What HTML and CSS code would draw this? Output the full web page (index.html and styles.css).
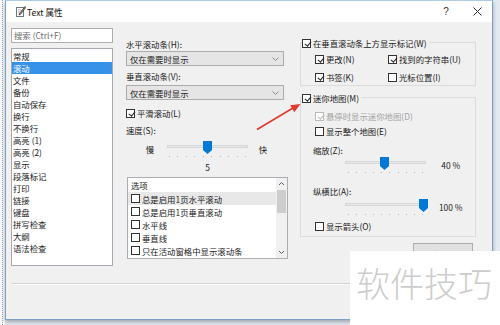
FILE: index.html
```html
<!DOCTYPE html>
<html lang="zh-CN">
<head>
  <meta charset="UTF-8">
  <title>Text 属性</title>
  <link rel="stylesheet" href="styles.css">
</head>
<body>
<div class="desk">
  <div class="window">
    <div class="titlebar">
      <svg class="app-icon" width="10" height="11" viewBox="0 0 10 11">
        <rect x="0.5" y="1.5" width="7" height="9" fill="#fff" stroke="#6b7b8c"/>
        <line x1="2" y1="4" x2="5" y2="4" stroke="#b0b8c0"/>
        <line x1="2" y1="6" x2="4" y2="6" stroke="#b0b8c0"/>
        <path d="M9 0.5 L3.5 7.5 L3 9 L4.5 8.3 L9.8 1.5 Z" fill="#c8a060" stroke="#333" stroke-width="0.8"/>
      </svg>
      <span class="title">Text 属性</span>
      <span class="help">?</span>
      <span class="close">
        <svg width="9" height="9" viewBox="0 0 9 9"><path d="M0.5 0.5 L8.5 8.5 M8.5 0.5 L0.5 8.5" stroke="#333" stroke-width="1"/></svg>
      </span>
    </div>

    <div class="dialog">
      <div class="panes">
        <!-- page list -->
        <div class="nav">
          <div class="search">搜索 (Ctrl+F)</div>
          <ul class="nav-list">
            <li>常规</li>
            <li class="selected">滚动</li>
            <li>文件</li>
            <li>备份</li>
            <li>自动保存</li>
            <li>换行</li>
            <li>不换行</li>
            <li>高亮 (1)</li>
            <li>高亮 (2)</li>
            <li>显示</li>
            <li>段落标记</li>
            <li>打印</li>
            <li>链接</li>
            <li>键盘</li>
            <li>拼写检查</li>
            <li>大纲</li>
            <li>语法检查</li>
          </ul>
        </div>

        <!-- scrollbars column -->
        <div class="middle">
          <div class="label first">水平滚动条(H):</div>
          <div class="combo"><span>仅在需要时显示</span><svg width="7" height="4" viewBox="0 0 7 4"><path d="M0.5 0.5 L3.5 3.5 L6.5 0.5" fill="none" stroke="#888"/></svg></div>
          <div class="label second">垂直滚动条(V):</div>
          <div class="combo combo-2"><span>仅在需要时显示</span><svg width="7" height="4" viewBox="0 0 7 4"><path d="M0.5 0.5 L3.5 3.5 L6.5 0.5" fill="none" stroke="#888"/></svg></div>
          <div class="check-row smooth"><span class="box checked"></span>平滑滚动(L)</div>
          <div class="label speed">速度(S):</div>
          <div class="slider-row mid">
            <span class="end slow">慢</span>
            <div class="slider">
              <div class="track"></div>
              <svg class="thumb" style="left: 36px" width="9" height="13" viewBox="0 0 9 13"><path d="M0 0 H9 V9 L4.5 13 L0 9 Z" fill="#0078d7"/></svg>
              <div class="ticks"><i></i><i></i><i></i><i></i><i></i><i></i><i></i><i></i><i></i><i></i></div>
            </div>
            <span class="end fast">快</span>
          </div>
          <div class="speed-value">5</div>

          <div class="options">
            <div class="opt-body">
              <div class="opt-head">选项</div>
              <div class="opt-row hover"><span class="box"></span>总是启用1页水平滚动</div>
              <div class="opt-row"><span class="box"></span>总是启用1页垂直滚动</div>
              <div class="opt-row"><span class="box"></span>水平线</div>
              <div class="opt-row"><span class="box"></span>垂直线</div>
              <div class="opt-row"><span class="box"></span>只在活动窗格中显示滚动条</div>
            </div>
            <div class="scrollbar">
              <div class="sb-btn"><svg width="5" height="3" viewBox="0 0 5 3"><path d="M0 3 L2.5 0.5 L5 3" fill="none" stroke="#606060"/></svg></div>
              <div class="sb-thumb"></div>
              <div class="sb-btn down"><svg width="5" height="3" viewBox="0 0 5 3"><path d="M0 0 L2.5 2.5 L5 0" fill="none" stroke="#606060"/></svg></div>
            </div>
          </div>
        </div>

        <!-- markers and minimap column -->
        <div class="right">
          <div class="group markers">
            <div class="group-head"><span class="box checked"></span>在垂直滚动条上方显示标记(W)</div>
            <div class="group-row r1">
              <div class="col1"><span class="box checked"></span>更改(N)</div>
              <div><span class="box checked"></span>找到的字符串(U)</div>
            </div>
            <div class="group-row r2">
              <div class="col1"><span class="box checked"></span>书签(K)</div>
              <div><span class="box"></span>光标位置(I)</div>
            </div>
          </div>

          <div class="group minimap">
            <div class="group-head"><span class="box checked"></span>迷你地图(M)</div>
            <div class="group-row hover-map disabled"><span class="box checked"></span>悬停时显示迷你地图(D)</div>
            <div class="group-row whole-map"><span class="box"></span>显示整个地图(E)</div>
            <div class="label zoom-label">缩放(Z):</div>
            <div class="slider-row side">
              <div class="slider">
                <div class="track"></div>
                <svg class="thumb" style="left: 34.5px" width="9" height="13" viewBox="0 0 9 13"><path d="M0 0 H9 V9 L4.5 13 L0 9 Z" fill="#0078d7"/></svg>
                <div class="ticks"><i></i><i></i><i></i><i></i><i></i><i></i><i></i><i></i><i></i><i></i></div>
              </div>
              <span class="value">40 %</span>
            </div>
            <div class="label ratio-label">纵横比(A):</div>
            <div class="slider-row side second">
              <div class="slider">
                <div class="track"></div>
                <svg class="thumb" style="left: 73.5px" width="9" height="13" viewBox="0 0 9 13"><path d="M0 0 H9 V9 L4.5 13 L0 9 Z" fill="#0078d7"/></svg>
                <div class="ticks"><i></i><i></i><i></i><i></i><i></i><i></i><i></i><i></i><i></i><i></i></div>
              </div>
              <span class="value">100 %</span>
            </div>
            <div class="group-row arrows"><span class="box"></span>显示箭头(O)</div>
          </div>

          <button class="reset">默认(D)</button>
        </div>
      </div>
      <div class="separator"></div>
    </div>
  </div>

  <svg class="pointer" width="500" height="325" viewBox="0 0 500 325">
    <line x1="257" y1="129.5" x2="293" y2="108" stroke="#e2392f" stroke-width="1.6"/>
    <polygon points="300.5,104 294.3,112.2 290.2,105.3" fill="#e2392f"/>
  </svg>
  <div class="watermark">软件技巧</div>
</div>
</body>
</html>
```

FILE: styles.css
```css
* {
  box-sizing: border-box;
}

body {
  margin: 0;
  width: 500px;
  height: 325px;
  overflow: hidden;
  font-family: "Noto Sans CJK SC", "Noto Sans", sans-serif;
  font-size: 8.4px;
  color: #1a1a1a;
}

.desk {
  position: relative;
  width: 500px;
  height: 325px;
  background: linear-gradient(to right, #f7f8f9 0 5px, #e3eaf2 5px);
}

.desk::before {
  content: "";
  position: absolute;
  left: 2px;
  top: 0;
  height: 325px;
  border-left: 1px dotted #9aa3ad;
}

.window {
  margin-left: 5px;
  width: 488px;
  height: 320px;
  border: 1px solid #7d9fc6;
  border-top-color: #aecbea;
  background: #f0f0f0;
  box-shadow: 0 2px 4px rgba(0, 0, 0, 0.3);
  display: flex;
  flex-direction: column;
}

/* title bar */
.titlebar {
  height: 21px;
  background: #fff;
  display: flex;
  align-items: center;
  padding-left: 10px;
}

.app-icon {
  margin-top: -1px;
}

.title {
  margin-left: 1px;
  font-size: 8.6px;
  color: #111;
}

.help {
  margin-left: auto;
  width: 28px;
  text-align: center;
  font-family: "Liberation Sans", sans-serif;
  font-size: 10px;
  color: #333;
}

.close {
  width: 32px;
  height: 21px;
  display: flex;
  align-items: center;
  justify-content: center;
  padding-left: 3px;
}

/* dialog body */
.dialog {
  flex: 1;
  display: flex;
  flex-direction: column;
}

.panes {
  display: flex;
  height: 261px;
  padding: 6px 0 0 5px;
}

.separator {
  height: 2px;
  margin: 0 10px 0 5px;
  border-top: 1px solid #d3d3d3;
  border-bottom: 1px solid #fbfbfb;
}

/* page list */
.nav {
  width: 102px;
}

.search {
  height: 15px;
  border: 1px solid #abadb3;
  background: #fff;
  color: #6d6d6d;
  line-height: 13px;
  padding-left: 2px;
}

.nav-list {
  list-style: none;
  margin: 5px 0 0;
  padding: 1px 0 0;
  height: 218px;
  border: 1px solid #a5a9b0;
  background: #fff;
}

.nav-list li {
  height: 12px;
  line-height: 12px;
  padding-left: 1px;
}

.nav-list li.selected {
  background: #3592e8;
  color: #fff;
}

/* shared bits */
.label {
  height: 12px;
  line-height: 12px;
}

.box {
  position: relative;
  display: inline-block;
  flex: none;
  width: 9px;
  height: 9px;
  border: 1px solid #333;
  background: #fff;
  margin-right: 2px;
}

.box.checked::after {
  content: "";
  position: absolute;
  left: 2.5px;
  top: 0;
  width: 2.5px;
  height: 5px;
  border-right: 1px solid #222;
  border-bottom: 1px solid #222;
  transform: rotate(40deg);
}

.check-row,
.group-row {
  display: flex;
  align-items: center;
  height: 12px;
  line-height: 12px;
}

/* middle column */
.middle {
  width: 162px;
  margin-left: 13px;
  display: flex;
  flex-direction: column;
}

.label.first {
  margin-top: 10px;
}

.combo {
  margin-top: 1px;
  width: 158px;
  height: 15px;
  border: 1px solid #acacac;
  background: #e5e5e5;
  display: flex;
  align-items: center;
  justify-content: space-between;
  padding: 0 4px 0 3px;
}

.label.second {
  margin-top: 4px;
}

.combo-2 {
  margin-top: 3px;
}

.check-row.smooth {
  margin-top: 7px;
}

.label.speed {
  margin-top: 5px;
}

.slider-row {
  display: flex;
  height: 20px;
}

.slider-row.mid {
  margin-top: 4px;
}

.slider {
  position: relative;
  height: 19px;
}

.track {
  margin-top: 5px;
  height: 3px;
  background: #e7eaea;
  border: 1px solid #d6d6d6;
}

.thumb {
  position: absolute;
  top: 1px;
}

.ticks {
  display: flex;
  justify-content: space-between;
  margin-top: 8px;
}

.ticks i {
  width: 1px;
  height: 1px;
  background: #b8b8b8;
}

.mid .slider {
  width: 81px;
  margin-left: 7px;
}

.mid .ticks {
  padding: 0 2px;
}

.end {
  width: 20px;
  margin-top: 3px;
  text-align: center;
  line-height: 12px;
}

.slow {
  margin-left: 14px;
}

.fast {
  margin-left: 5px;
}

.speed-value {
  width: 81px;
  margin-left: 41px;
  margin-top: 1px;
  height: 12px;
  line-height: 12px;
  text-align: center;
}

.options {
  margin-top: 4px;
  margin-left: 1px;
  width: 161px;
  height: 82px;
  border: 1px solid #abadb3;
  background: #fff;
  display: flex;
}

.opt-body {
  flex: 1;
}

.opt-head {
  height: 14px;
  line-height: 13px;
  padding: 1px 0 0 3px;
}

.opt-row {
  display: flex;
  align-items: center;
  height: 13px;
  padding-left: 3px;
}

.opt-row.hover {
  background: #e8e8e8;
}

.scrollbar {
  width: 11px;
  background: #f0f0f0;
  display: flex;
  flex-direction: column;
}

.sb-btn {
  height: 11px;
  display: flex;
  align-items: center;
  justify-content: center;
}

.sb-btn.down {
  margin-top: auto;
}

.sb-thumb {
  margin: 1px 1px 0;
  height: 23px;
  background: #cdcdcd;
}

/* right column */
.right {
  width: 176px;
  margin-left: 12px;
  display: flex;
  flex-direction: column;
}

.group {
  border: 1px solid #dcdcdc;
}

.group.markers {
  margin-top: 14px;
  padding-bottom: 2px;
}

.group.minimap {
  margin-top: 11px;
  padding-bottom: 4px;
}

.group-head {
  display: flex;
  align-items: center;
  width: fit-content;
  height: 12px;
  line-height: 12px;
  margin: -6px 0 0 1px;
  padding-right: 2px;
  background: #f0f0f0;
}

.group-row {
  margin-left: 14px;
}

.group-row .col1 {
  width: 73px;
  display: flex;
  align-items: center;
}

.group-row > div {
  display: flex;
  align-items: center;
}

.group-row.r1 {
  margin-top: 4px;
}

.group-row.r2 {
  margin-top: 6px;
}

.group-row.hover-map {
  margin-top: 6px;
}

.group-row.disabled {
  color: #a3a3a3;
}

.disabled .box {
  border-color: #bcbcbc;
}

.disabled .box.checked::after {
  border-color: #bcbcbc;
}

.group-row.whole-map {
  margin-top: 3px;
}

.zoom-label {
  margin: 7px 0 0 12px;
}

.ratio-label {
  margin: 10px 0 0 12px;
}

.side {
  height: 19px;
}

.side.second {
  margin-top: 1px;
}

.side .slider {
  width: 82px;
  margin-left: 44px;
}

.side .ticks {
  padding: 0 3px 0 3px;
}

.value {
  width: 49px;
  margin-top: 3px;
  line-height: 12px;
  text-align: center;
}

.group-row.arrows {
  margin-top: 3px;
}

.reset {
  align-self: flex-end;
  margin: 6px 3px 0 0;
  width: 60px;
  height: 21px;
  border: 1px solid #adadad;
  background: #e1e1e1;
  font-family: inherit;
  font-size: 8.4px;
  color: #1a1a1a;
  padding: 0;
}

/* overlays */
.pointer {
  position: absolute;
  left: 0;
  top: 0;
  pointer-events: none;
}

.watermark {
  position: absolute;
  left: 350px;
  top: 251px;
  width: 150px;
  height: 74px;
  background: #fff;
  padding-left: 6px;
  font-size: 34px;
  line-height: 64px;
  font-weight: 300;
  color: #cdcdcd;
}
```
